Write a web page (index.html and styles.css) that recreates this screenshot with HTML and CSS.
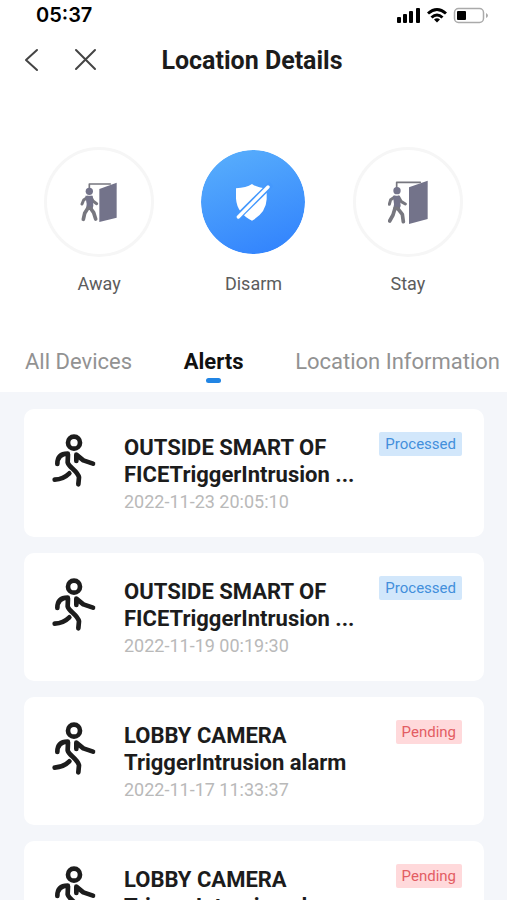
FILE: index.html
```html
<!DOCTYPE html>
<html lang="en">
<head>
<meta charset="utf-8">
<meta name="viewport" content="width=device-width, initial-scale=1">
<title>Location Details</title>
<link rel="stylesheet" href="styles.css">
</head>
<body>
<svg width="0" height="0" class="sprite" aria-hidden="true">
  <symbol id="runner" viewBox="90 90 144 180">
    <g fill="none" stroke="#1c1c1c" stroke-width="14" stroke-linecap="round" stroke-linejoin="round">
      <circle cx="162" cy="125" r="18"/>
      <path d="M112 189C112 171 120 158 143 158"/>
      <path d="M144 160L143 184C147 200 172 208 177 229L175 250"/>
      <path d="M169 180V161L190 178L219 188"/>
      <path d="M104 236C122 235 136 229 148 217"/>
    </g>
  </symbol>
</svg>
<div class="app">
  <div class="status">
    <time class="clock">05:37</time>
    <svg class="indicators" width="92" height="18" viewBox="0 0 92 18" aria-hidden="true">
      <g><rect x="1" y="11" width="4" height="6" rx="1"/><rect x="7" y="8" width="4" height="9" rx="1"/><rect x="13" y="5" width="4" height="12" rx="1"/><rect x="20" y="2" width="4" height="15" rx="1"/></g>
      <g fill="none" stroke="#000" stroke-width="3"><path d="M32 7.500Q41 -.5 50 7.500"/><path d="M35.500 11.500Q41 6.500 46.500 11.500"/></g>
      <path d="M38 13.500Q41 11 44 13.500L41 16.500Z"/>
      <rect x="58.500" y="2.500" width="29" height="14" rx="4" fill="none" stroke="#aaa" stroke-width="1.500"/>
      <rect x="61" y="5" width="9" height="9" rx="1"/>
      <path d="M90 7Q92 8 92 9.500Q92 11 90 12Z" fill="#aaa"/>
    </svg>
  </div>
  <header class="bar">
    <div class="nav">
      <button type="button" class="icon-button" aria-label="Back"><svg width="24" height="24" viewBox="0 0 24 24"><path d="M17 2L6 12L17 22"/></svg></button>
      <button type="button" class="icon-button" aria-label="Close"><svg width="24" height="24" viewBox="0 0 24 24"><path d="M2 2L21 21M21 2L2 21"/></svg></button>
    </div>
    <h1>Location Details</h1>
  </header>
  <section class="modes" aria-label="Security mode">
    <button type="button" class="mode">
      <span class="disc"><svg width="40" height="44" viewBox="120 120 120 132">
        <path class="line" stroke-width="5" d="M151 148V132H214"/>
        <path d="M181 147L233 128V233L181 246Z"/>
        <circle cx="151" cy="154" r="11"/>
        <path class="line" stroke-width="9" d="M146 172L134 180L129 192M156 172L162 183L173 191"/>
        <path d="M139 167H161L163 197L160 210H141L143 192Z"/>
        <path class="line" stroke-width="11" d="M147 204L137 220L133 238M154 204L164 218L170 237"/>
      </svg></span>
      <span>Away</span>
    </button>
    <button type="button" class="mode active" aria-pressed="true">
      <span class="disc"><svg width="40" height="44" viewBox="117 120 120 132">
        <path d="M174 132Q188 143 218 145V178Q216 219 174 242Q129 219 126 176V145Q157 143 174 132Z"/>
        <path class="cut" d="M126 236L232 132"/>
        <path class="slash" d="M133 231L222 141"/>
      </svg></span>
      <span>Disarm</span>
    </button>
    <button type="button" class="mode">
      <span class="disc"><svg width="40" height="44" viewBox="117 119 120 132">
        <path class="line" stroke-width="5" d="M143 145V126H214"/>
        <path d="M180 141L236 121V236L180 251Z"/>
        <circle cx="144" cy="151" r="11"/>
        <path class="line" stroke-width="9" d="M137 170L125 178L121 192M149 170L157 184L169 191"/>
        <path d="M132 166H152L155 197L150 210H132L135 192Z"/>
        <path class="line" stroke-width="11" d="M138 204L132 224L122 242M146 204L160 222L163 244"/>
      </svg></span>
      <span>Stay</span>
    </button>
  </section>
  <nav class="tabs">
    <a href="#devices">All Devices</a>
    <a href="#alerts" class="current" aria-current="page">Alerts</a>
    <a href="#information">Location Information</a>
  </nav>
  <main class="alerts" id="alerts">
    <article class="card">
      <svg class="runner" aria-hidden="true"><use href="#runner"/></svg>
      <div class="body"><h2>OUTSIDE SMART OF<br>FICETriggerIntrusion ...</h2><time>2022-11-23 20:05:10</time></div>
      <span class="tag processed">Processed</span>
    </article>
    <article class="card">
      <svg class="runner" aria-hidden="true"><use href="#runner"/></svg>
      <div class="body"><h2>OUTSIDE SMART OF<br>FICETriggerIntrusion ...</h2><time>2022-11-19 00:19:30</time></div>
      <span class="tag processed">Processed</span>
    </article>
    <article class="card">
      <svg class="runner" aria-hidden="true"><use href="#runner"/></svg>
      <div class="body"><h2>LOBBY CAMERA<br>TriggerIntrusion alarm</h2><time>2022-11-17 11:33:37</time></div>
      <span class="tag pending">Pending</span>
    </article>
    <article class="card">
      <svg class="runner" aria-hidden="true"><use href="#runner"/></svg>
      <div class="body"><h2>LOBBY CAMERA<br>TriggerIntrusion alarm</h2></div>
      <span class="tag pending">Pending</span>
    </article>
  </main>
</div>
</body>
</html>
```
FILE: styles.css
```css
* { box-sizing: border-box; }
body { margin: 0; background: #fff; font-family: Roboto, "Liberation Sans", sans-serif; color: #1c1c1c; }
button { border: 0; padding: 0; background: none; font: inherit; color: inherit; }
h1, h2 { margin: 0; font-weight: 700; }
.sprite { position: absolute; }
.app { display: flex; flex-direction: column; height: 100vh; overflow: hidden; }

.status { display: flex; justify-content: space-between; align-items: center; flex: none; height: 30px; padding: 0 19px 0 36px; }
.clock { font: 600 20px/30px Inter, sans-serif; color: #000; }

.bar { display: grid; grid-template-columns: 1fr auto 1fr; align-items: center; flex: none; height: 60px; padding: 0 23px 0 20px; }
.nav { display: flex; gap: 30px; }
.icon-button { display: flex; }
.icon-button path { fill: none; stroke: #444; stroke-width: 2; stroke-linecap: round; stroke-linejoin: round; }
.bar h1 { padding-top: 2px; font-size: 25px; line-height: 32px; }

.modes { display: grid; grid-template-columns: repeat(3, 1fr); flex: none; padding: 57px 22px 0; }
.mode { display: flex; flex-direction: column; align-items: center; gap: 15px; font-size: 18px; line-height: 24px; color: #5c5c5c; }
.disc { display: flex; align-items: center; justify-content: center; width: 110px; height: 110px; border: 3px solid #f6f6f6; border-radius: 50%; }
.disc svg { fill: #73738a; }
.line { fill: none; stroke: #77777f; stroke-linecap: round; stroke-linejoin: round; }
.active .disc { border-color: #fff; background: linear-gradient(160deg, #5ab0fc, #2f80fd) padding-box; }
.active .disc svg { fill: #fff; }
.cut { stroke: #4498fd; stroke-width: 19; }
.slash { stroke: #fff; stroke-width: 10; stroke-linecap: round; }

.tabs { display: flex; justify-content: space-between; flex: none; height: 96px; padding: 50px 7px 0 25px; font-size: 22px; line-height: 32px; }
.tabs a { color: #929292; text-decoration: none; white-space: nowrap; }
.tabs .current { display: flex; flex-direction: column; align-items: center; font-weight: 700; color: #111; }
.current::after { content: ""; width: 15px; height: 5px; border-radius: 3px; background: #2185e4; }

.alerts { display: flex; flex-direction: column; gap: 16px; flex: 1; min-height: 0; overflow: hidden; padding: 17px 23px 0 24px; background: #f4f6fa; }
.card { display: flex; align-items: flex-start; flex: none; min-height: 128px; padding: 22px; border-radius: 10px; background: #fff; }
.runner { flex: none; width: 48px; height: 60px; margin-left: 4px; }
.body { flex: 1; margin: 3px 0 0 26px; }
.body h2 { font-size: 22px; line-height: 27px; white-space: nowrap; }
.body time { display: block; font-size: 18px; line-height: 27px; color: #b9b9b9; }
.tag { flex: none; margin-top: 1px; padding: 0 6px; border-radius: 2px; font-size: 15px; line-height: 24px; }
.processed { background: #d2e7fb; color: #438fdb; }
.pending { background: #ffd9db; color: #e35d63; }
```
